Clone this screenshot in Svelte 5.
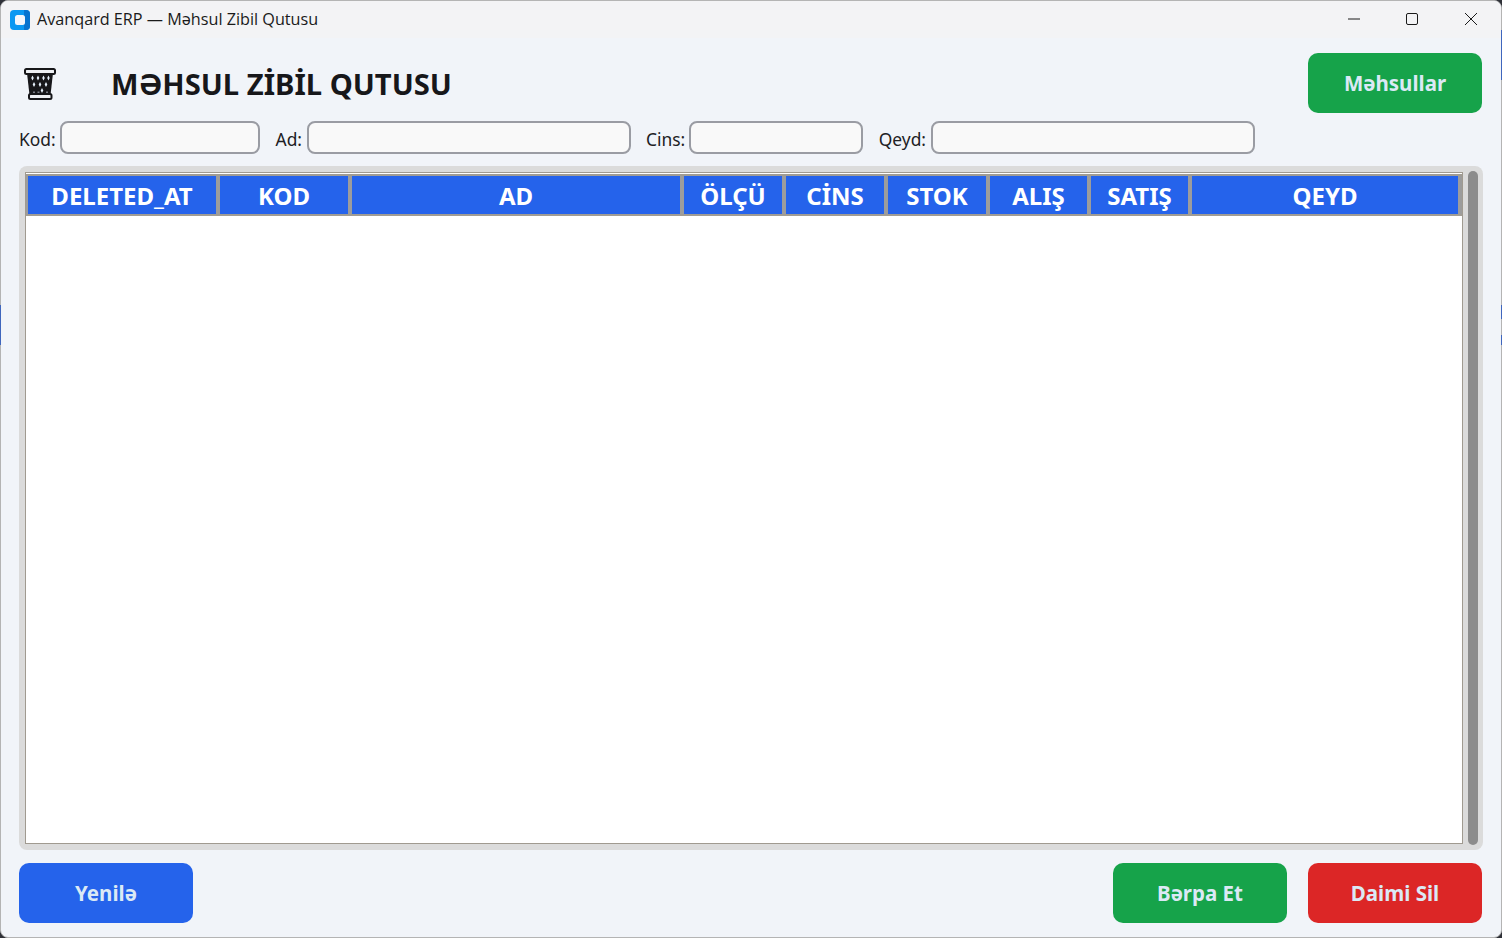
<script>
  const filters = [
    { label: "Kod:", labelWidth: 36, width: 200 },
    { label: "Ad:", labelWidth: 27, width: 324 },
    { label: "Cins:", labelWidth: 38, width: 174 },
    { label: "Qeyd:", labelWidth: 48, width: 324 }
  ];
  const columns = [
    { name: "DELETED_AT", width: 194 },
    { name: "KOD", width: 132 },
    { name: "AD", width: 332 },
    { name: "ÖLÇÜ", width: 102 },
    { name: "CİNS", width: 102 },
    { name: "STOK", width: 102 },
    { name: "ALIŞ", width: 101 },
    { name: "SATIŞ", width: 101 },
    { name: "QEYD", width: 270 }
  ];
</script>

<div class="desktop">
  <span class="peek left"></span>
  <span class="peek right a"></span>
  <span class="peek right b"></span>
  <span class="peek right c"></span>
  <div class="window">
    <header class="titlebar">
      <svg class="app-icon" width="20" height="20" viewBox="0 0 20 20" aria-hidden="true">
        <rect width="20" height="20" rx="4" fill="#0a98f2" />
        <path d="M14 0h2a4 4 0 0 1 4 4v12a4 4 0 0 1-4 4h-2z" fill="#0673cf" />
        <rect x="5" y="5" width="10" height="10" rx="2.5" fill="#f3f6fb" />
      </svg>
      <span class="title">Avanqard ERP — Məhsul Zibil Qutusu</span>
      <div class="controls">
        <svg width="14" height="14" viewBox="0 0 14 14" aria-hidden="true"><path d="M1 7h12" stroke="#1a1a1a" fill="none" /></svg>
        <svg width="14" height="14" viewBox="0 0 14 14" aria-hidden="true"><rect x="1.5" y="1.5" width="11" height="11" rx="1.5" stroke="#1a1a1a" fill="none" /></svg>
        <svg width="14" height="14" viewBox="0 0 14 14" aria-hidden="true"><path d="M1 1l12 12M13 1L1 13" stroke="#1a1a1a" fill="none" /></svg>
      </div>
    </header>

    <main class="content">
      <div class="top">
        <div class="heading">
          <svg class="trash" width="34" height="34" viewBox="0 0 34 34" aria-hidden="true">
            <path d="M4 6h26l-2.5 22h-21z" fill="#17171a" />
            <rect x="2" y="2" width="30" height="5" rx="1.5" fill="#eef0f4" stroke="#17171a" stroke-width="2" />
            <rect x="6" y="27" width="22.5" height="5" rx="1.5" fill="#eef0f4" stroke="#17171a" stroke-width="2" />
            <g fill="#e6f0fb">
              <path d="M9.5 8.5l1.3 2.5-1.3 2.5L8.200 11zM15 8.500l1.300 2.500-1.300 2.500-1.300-2.500zM20.500 8.500l1.300 2.500-1.300 2.500-1.300-2.500zM25.500 8.500l1.200 2.500-1.200 2.500-1.300-2.500z" />
              <path d="M11 15l1.300 2.500-1.300 2.500-1.300-2.500zM17 15l1.300 2.500-1.300 2.500-1.300-2.500zM23 15l1.300 2.500-1.300 2.500-1.300-2.500z" />
              <path d="M19 21l1.300 2.500-1.300 2.500-1.300-2.500z" />
            </g>
            <g fill="#7a7d86">
              <rect x="10" y="24.500" width="2" height="1.500" /><rect x="14.500" y="24.500" width="2" height="1.500" /><rect x="23" y="24.500" width="2" height="1.500" />
            </g>
          </svg>
          <h1>MƏHSUL ZİBİL QUTUSU</h1>
        </div>
        <button class="btn green">Məhsullar</button>
      </div>

      <div class="filters">
        {#each filters as f}
          <label class="filter">
            <span style="width: {f.labelWidth}px">{f.label}</span>
            <input type="text" style="width: {f.width}px" />
          </label>
        {/each}
      </div>

      <section class="frame">
        <div class="tree">
          <div class="thead">
            {#each columns as c}
              <div class="th" style="width: {c.width}px">{c.name}</div>
            {/each}
          </div>
        </div>
        <div class="thumb"></div>
      </section>

      <footer class="actions">
        <button class="btn blue">Yenilə</button>
        <div class="right">
          <button class="btn green">Bərpa Et</button>
          <button class="btn red">Daimi Sil</button>
        </div>
      </footer>
    </main>
  </div>
</div>

<style>
  :global(body) {
    margin: 0;
    background: #3a3f4a;
    overflow: hidden;
  }
  .desktop {
    position: relative;
    width: 1502px;
    height: 938px;
    background: #2f3138;
  }
  /* wallpaper showing through the 1px window edge */
  .peek {
    position: absolute;
    z-index: 1;
    width: 1px;
    background: #3f66bd;
  }
  .peek.left { left: 0; top: 305px; height: 40px; }
  .peek.right { right: 0; }
  .peek.a { top: 30px; height: 50px; }
  .peek.b { top: 305px; height: 14px; }
  .peek.c { top: 335px; height: 10px; }
  .window {
    width: 1500px;
    height: 936px;
    border: 1px solid #b4b4b4;
    border-radius: 8px;
    overflow: hidden;
    background: #f1f4f9;
    display: flex;
    flex-direction: column;
    font-family: "Noto Sans", "Open Sans", sans-serif;
  }
  .titlebar {
    height: 37px;
    flex: none;
    display: flex;
    align-items: center;
    padding-left: 9px;
    background: #f3f3f5;
    color: #1a1a1a;
  }
  .app-icon { flex: none; }
  .title {
    margin-left: 7px;
    margin-top: -1px;
    font-size: 16.2px;
    font-family: "Open Sans", sans-serif;
    white-space: nowrap;
  }
  .controls {
    margin-left: auto;
    margin-top: -2px;
    display: flex;
    gap: 45px;
    padding-right: 23px;
  }
  .controls svg:first-child { margin-right: -1px; }
  .content {
    flex: 1;
    display: flex;
    flex-direction: column;
    padding: 15px 19px 14px 18px;
    min-height: 0;
  }
  .top {
    display: flex;
    align-items: center;
    justify-content: space-between;
    height: 60px;
    flex: none;
  }
  .heading {
    display: flex;
    align-items: center;
    padding-left: 4px;
  }
  .trash {
    flex: none;
    margin-top: 1px;
  }
  h1 {
    margin: 2px 0 0 54px;
    font-size: 29.2px;
    font-weight: 700;
    color: #17171a;
    white-space: nowrap;
  }
  .btn {
    height: 60px;
    width: 174px;
    border: none;
    border-radius: 10px;
    color: #dbe9f5;
    font-family: "Noto Sans", sans-serif;
    font-size: 20.5px;
    font-weight: 700;
    padding: 0;
  }
  .green { background: #16a34a; }
  .blue { background: #2563eb; }
  .red { background: #dc2626; }
  .filters {
    display: flex;
    gap: 15px;
    margin-top: 8px;
    height: 34px;
    flex: none;
  }
  .filter {
    display: flex;
    align-items: center;
    gap: 5px;
    font-size: 17.4px;
    color: #202024;
  }
  .filter span {
    padding-top: 2px;
    white-space: nowrap;
    text-align: right;
  }
  input {
    height: 33px;
    box-sizing: border-box;
    border: 2px solid #9a9ca3;
    border-radius: 8px;
    background: #f9f9f9;
    padding: 0;
    margin-bottom: 1px;
  }
  .frame {
    flex: 1;
    min-height: 0;
    margin-top: 11px;
    margin-right: -1px;
    background: #dbdbdb;
    border-radius: 8px;
    padding: 5px 5px 5px 6px;
    display: flex;
    gap: 5px;
  }
  .tree {
    flex: 1;
    margin: 1px 0;
    box-sizing: border-box;
    background: #fff;
    border: 1px solid #a09a90;
    padding-top: 1px;
  }
  .thead {
    display: flex;
    height: 42px;
    box-sizing: border-box;
    border-top: 2px solid #a09c94;
    border-bottom: 2px solid #a09c94;
    background: #2563eb;
  }
  .th {
    flex: none;
    box-sizing: border-box;
    display: flex;
    align-items: center;
    justify-content: center;
    border-right: 4px solid #9c9c9c;
    color: #fff;
    font-size: 24px;
    font-weight: 700;
    white-space: nowrap;
  }
  .th:first-child { border-left: 2px solid #9c9c9c; }
  .thumb {
    flex: none;
    width: 10px;
    background: #8c8c8c;
    border-radius: 5px;
  }
  .actions {
    flex: none;
    margin-top: 13px;
    display: flex;
    justify-content: space-between;
  }
  .right {
    display: flex;
    gap: 21px;
  }
</style>
